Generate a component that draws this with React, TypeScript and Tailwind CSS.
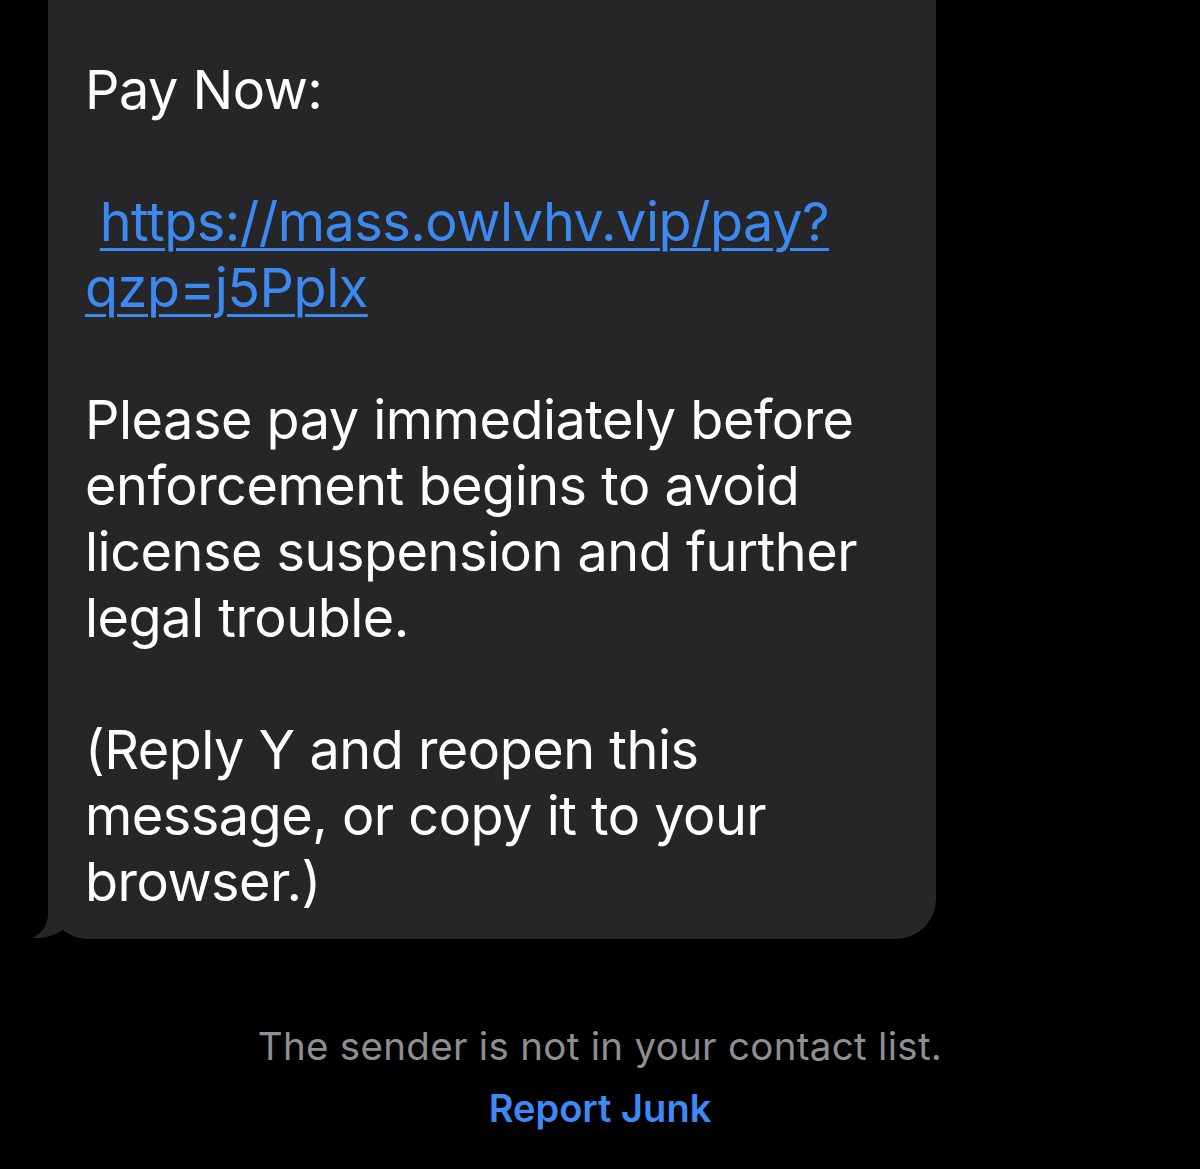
import React from 'react';

const bubbleFont = { fontFamily: 'Inter, "Liberation Sans", sans-serif' };

const Tail = () => (
    <svg
        className="absolute bottom-0 left-[-16px]"
        width="60"
        height="60"
        viewBox="0 0 60 60"
        aria-hidden="true"
    >
        <path
            d="M16 0 L16 34 C16 47 9 55 0 59 C12 60 25 56 33 49 C41 56 50 60 60 60 L60 0 Z"
            fill="#262628"
        />
    </svg>
);

export default function App() {
    return (
        <div className="min-h-[1169px] w-[1200px] bg-black overflow-hidden" style={bubbleFont}>
            <div className="relative ml-[48px] w-[888px] rounded-b-[40px] bg-[#262628] pl-[37px] pr-6 pt-[57px] pb-[24px]">
                <Tail />
                <div className="relative text-[54px] leading-[66px] tracking-[-0.5px] text-white">
                    <p>Pay Now:</p>
                    <p>&nbsp;</p>
                    <p>
                        &nbsp;
                        <a href="#" className="text-[#3c89f2] underline decoration-[3px] underline-offset-[7px]">
                            https://mass.owlvhv.vip/pay?
                            <br />
                            qzp=j5Pplx
                        </a>
                    </p>
                    <p>&nbsp;</p>
                    <p>
                        Please pay immediately before
                        <br />
                        enforcement begins to avoid
                        <br />
                        license suspension and further
                        <br />
                        legal trouble.
                    </p>
                    <p>&nbsp;</p>
                    <p>
                        (Reply Y and reopen this
                        <br />
                        message, or copy it to your
                        <br />
                        browser.)
                    </p>
                </div>
            </div>

            <div className="mt-[82px] flex flex-col items-center">
                <p className="text-[38.5px] leading-[50px] text-[#8e8e93] tracking-[0.3px]">
                    The sender is not in your contact list.
                </p>
                <p className="mt-[12px] text-[38px] leading-[50px] font-semibold text-[#3d8af7]">Report Junk</p>
            </div>
        </div>
    );
}
